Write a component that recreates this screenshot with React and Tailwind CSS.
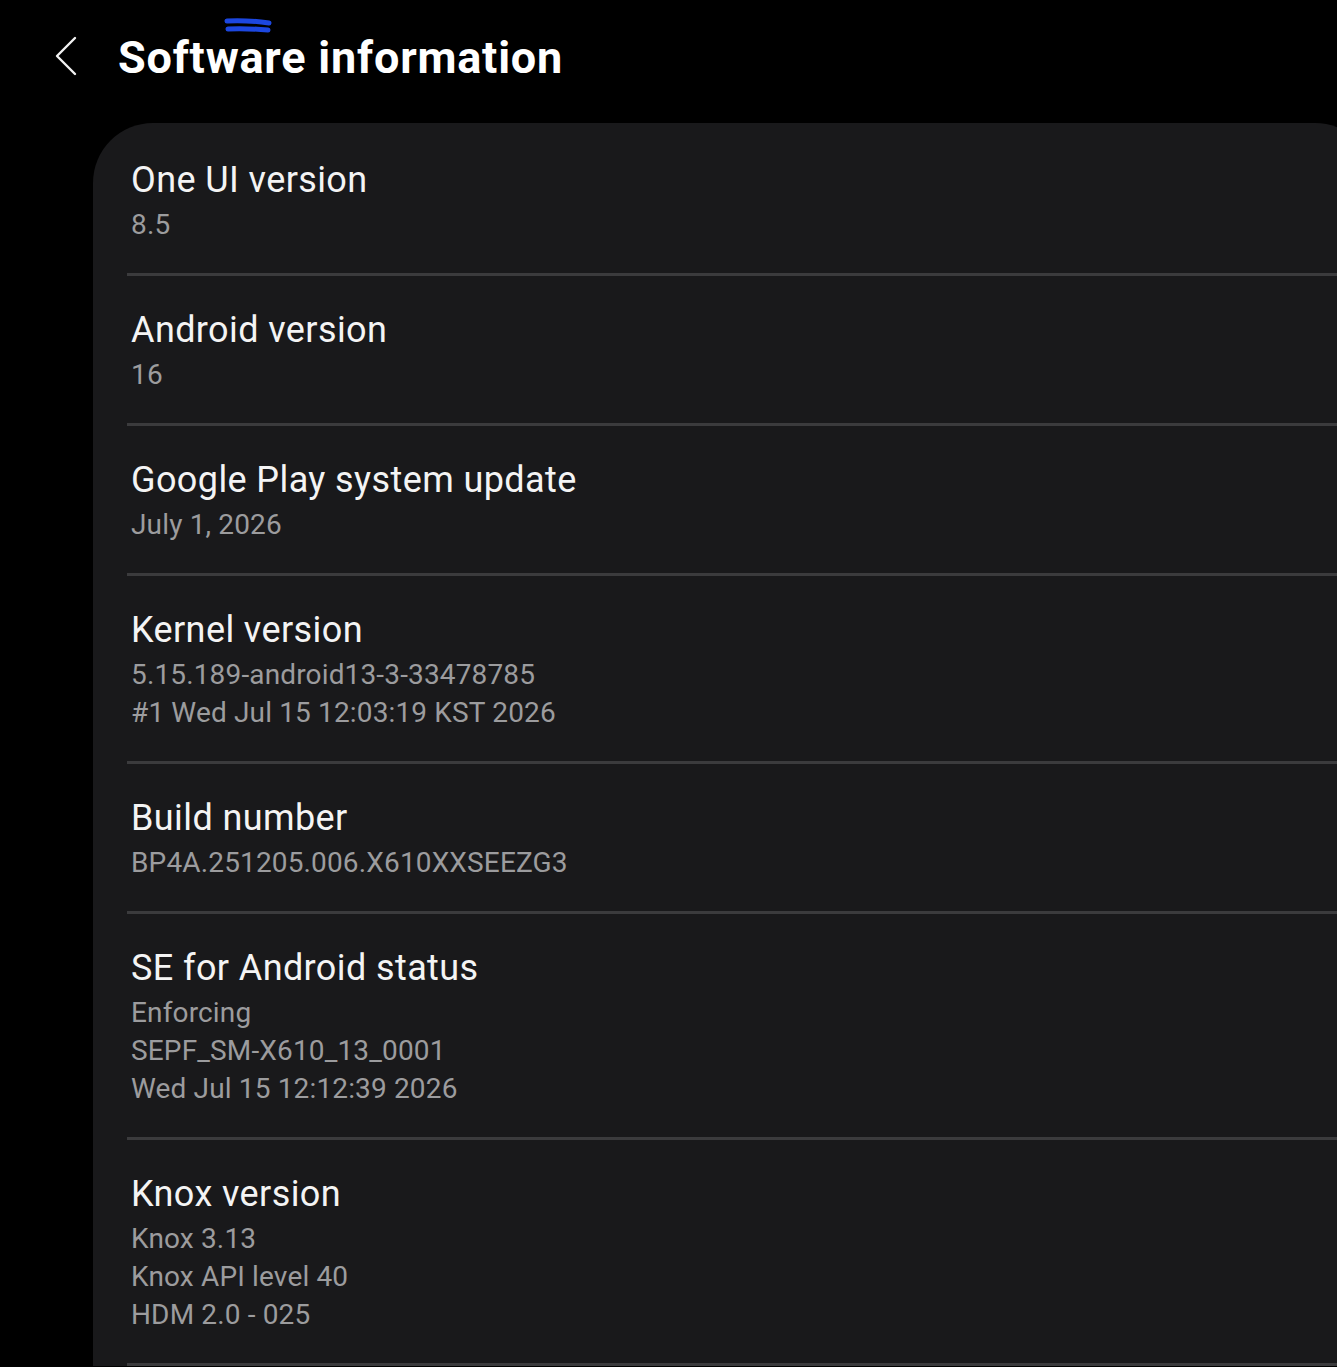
import React from "react";

const rows = [
  { title: "One UI version", lines: ["8.5"] },
  { title: "Android version", lines: ["16"] },
  { title: "Google Play system update", lines: ["July 1, 2026"] },
  {
    title: "Kernel version",
    lines: ["5.15.189-android13-3-33478785", "#1 Wed Jul 15 12:03:19 KST 2026"],
  },
  { title: "Build number", lines: ["BP4A.251205.006.X610XXSEEZG3"] },
  {
    title: "SE for Android status",
    lines: ["Enforcing", "SEPF_SM-X610_13_0001", "Wed Jul 15 12:12:39 2026"],
  },
  {
    title: "Knox version",
    lines: ["Knox 3.13", "Knox API level 40", "HDM 2.0 - 025"],
  },
];

const InfoRow = ({ title, lines }) => (
  <div>
    <div className="pl-[38px] pt-[31px] pb-[29px]">
      <div className="mb-[3px] text-[36px] leading-[46px] tracking-[0.4px] text-[#f4f4f4]">{title}</div>
      {lines.map((line) => (
        <div key={line} className="text-[28px] leading-[38px] tracking-[0.15px] text-[#9c9c9e]">
          {line}
        </div>
      ))}
    </div>
    <div className="ml-[34px] h-[3px] bg-[#3b3b3d]" />
  </div>
);

export default function App() {
  return (
    <div
      className="h-[1367px] w-full overflow-hidden bg-black"
      style={{ fontFamily: "Roboto, 'Noto Sans', sans-serif" }}
    >
      {/* top bar */}
      <header className="relative flex h-[123px] items-start pt-[29px]">
        <button className="ml-[52px] flex h-[54px] w-[28px] items-center justify-center" aria-label="Back">
          <svg width="24" height="40" viewBox="0 0 24 40" fill="none">
            <path d="M21 2 L3 20 L21 38" stroke="#f2f2f2" strokeWidth="2.4" strokeLinecap="round" strokeLinejoin="round" />
          </svg>
        </button>
        <h1 className="ml-[38px] mt-[2px] text-[45px] font-bold leading-[54px] tracking-[0.8px] text-white">
          Software information
        </h1>
        {/* pen mark over the title */}
        <svg className="absolute left-[222px] top-[17px]" width="52" height="20" viewBox="0 0 52 20" fill="none">
          <path d="M5 4 C18 3 32 4 47 6" stroke="#1c47e0" strokeWidth="5" strokeLinecap="round" />
          <path d="M6 12 C20 11 34 12 46 13" stroke="#1c47e0" strokeWidth="5" strokeLinecap="round" />
        </svg>
      </header>

      {/* info card */}
      <section className="ml-[93px] w-[1282px] rounded-t-[60px] bg-[#19191b] pt-[3px]">
        {rows.map((row) => (
          <InfoRow key={row.title} {...row} />
        ))}
      </section>
    </div>
  );
}
